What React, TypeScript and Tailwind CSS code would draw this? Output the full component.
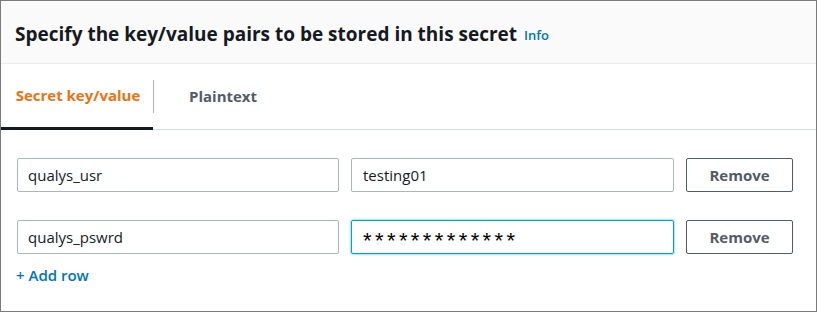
export default function App() {
  const rows = [
    { key: 'qualys_usr', value: 'testing01', focused: false },
    { key: 'qualys_pswrd', value: '*************', focused: true },
  ];

  return (
    <div className="w-[817px] h-[312px] bg-white border border-[#7b7b7b] font-['Open_Sans',sans-serif] overflow-hidden">
      {/* Header */}
      <div className="h-[63px] bg-[#fafafa] border-b border-[#eaeded] flex items-center pl-[14px] pt-[4px]">
        <h2 className="text-[19px] font-bold text-[#16191f]">
          Specify the key/value pairs to be stored in this secret
        </h2>
        <span className="ml-[7px] mt-[4px] text-[13px] font-semibold text-[#0073bb]">Info</span>
      </div>

      {/* Tabs */}
      <div className="flex items-stretch h-[66px] border-b border-[#d5dbdb]">
        <div className="w-[152px] flex items-center justify-center border-b-[3px] border-[#16191f] -mb-px relative">
          <span className="text-[15px] font-bold text-[#ec7211] pl-[2px]">Secret key/value</span>
          <div className="absolute right-[-1px] top-[16px] h-[33px] w-px bg-[#aab7b8]" />
        </div>
        <div className="flex items-center pl-[36px]">
          <span className="text-[15px] font-bold text-[#545b64]">Plaintext</span>
        </div>
      </div>

      {/* Rows */}
      <div className="pt-[28px] pl-[16px] flex flex-col gap-[28px]">
        {rows.map((r, i) => (
          <div key={i} className="flex items-center gap-[12px]">
            <div className="w-[322px] h-[34px] border border-[#aab7b8] rounded-[2px] flex items-center px-[10px] text-[15px] text-[#16191f]">
              {r.key}
            </div>
            {r.focused ? (
              <div className="w-[323px] h-[34px] border border-[#00a1c9] rounded-[2px] shadow-[0_0_2px_1px_rgba(0,161,201,0.35)] flex items-center px-[11px]">
                <span className="font-['Liberation_Sans',sans-serif] text-[22px] leading-none pt-[7px] tracking-[3.4px] text-black">
                  {r.value}
                </span>
              </div>
            ) : (
              <div className="w-[323px] h-[34px] border border-[#aab7b8] rounded-[2px] flex items-center px-[11px] text-[15px] text-[#16191f]">
                {r.value}
              </div>
            )}
            <button className="w-[107px] h-[34px] border border-[#545b64] rounded-[2px] bg-white text-[15px] font-bold text-[#545b64]">
              Remove
            </button>
          </div>
        ))}
      </div>
      <div className="pl-[15px] pt-[10px] text-[15px] font-semibold text-[#0073bb]">+ Add row</div>
    </div>
  );
}
